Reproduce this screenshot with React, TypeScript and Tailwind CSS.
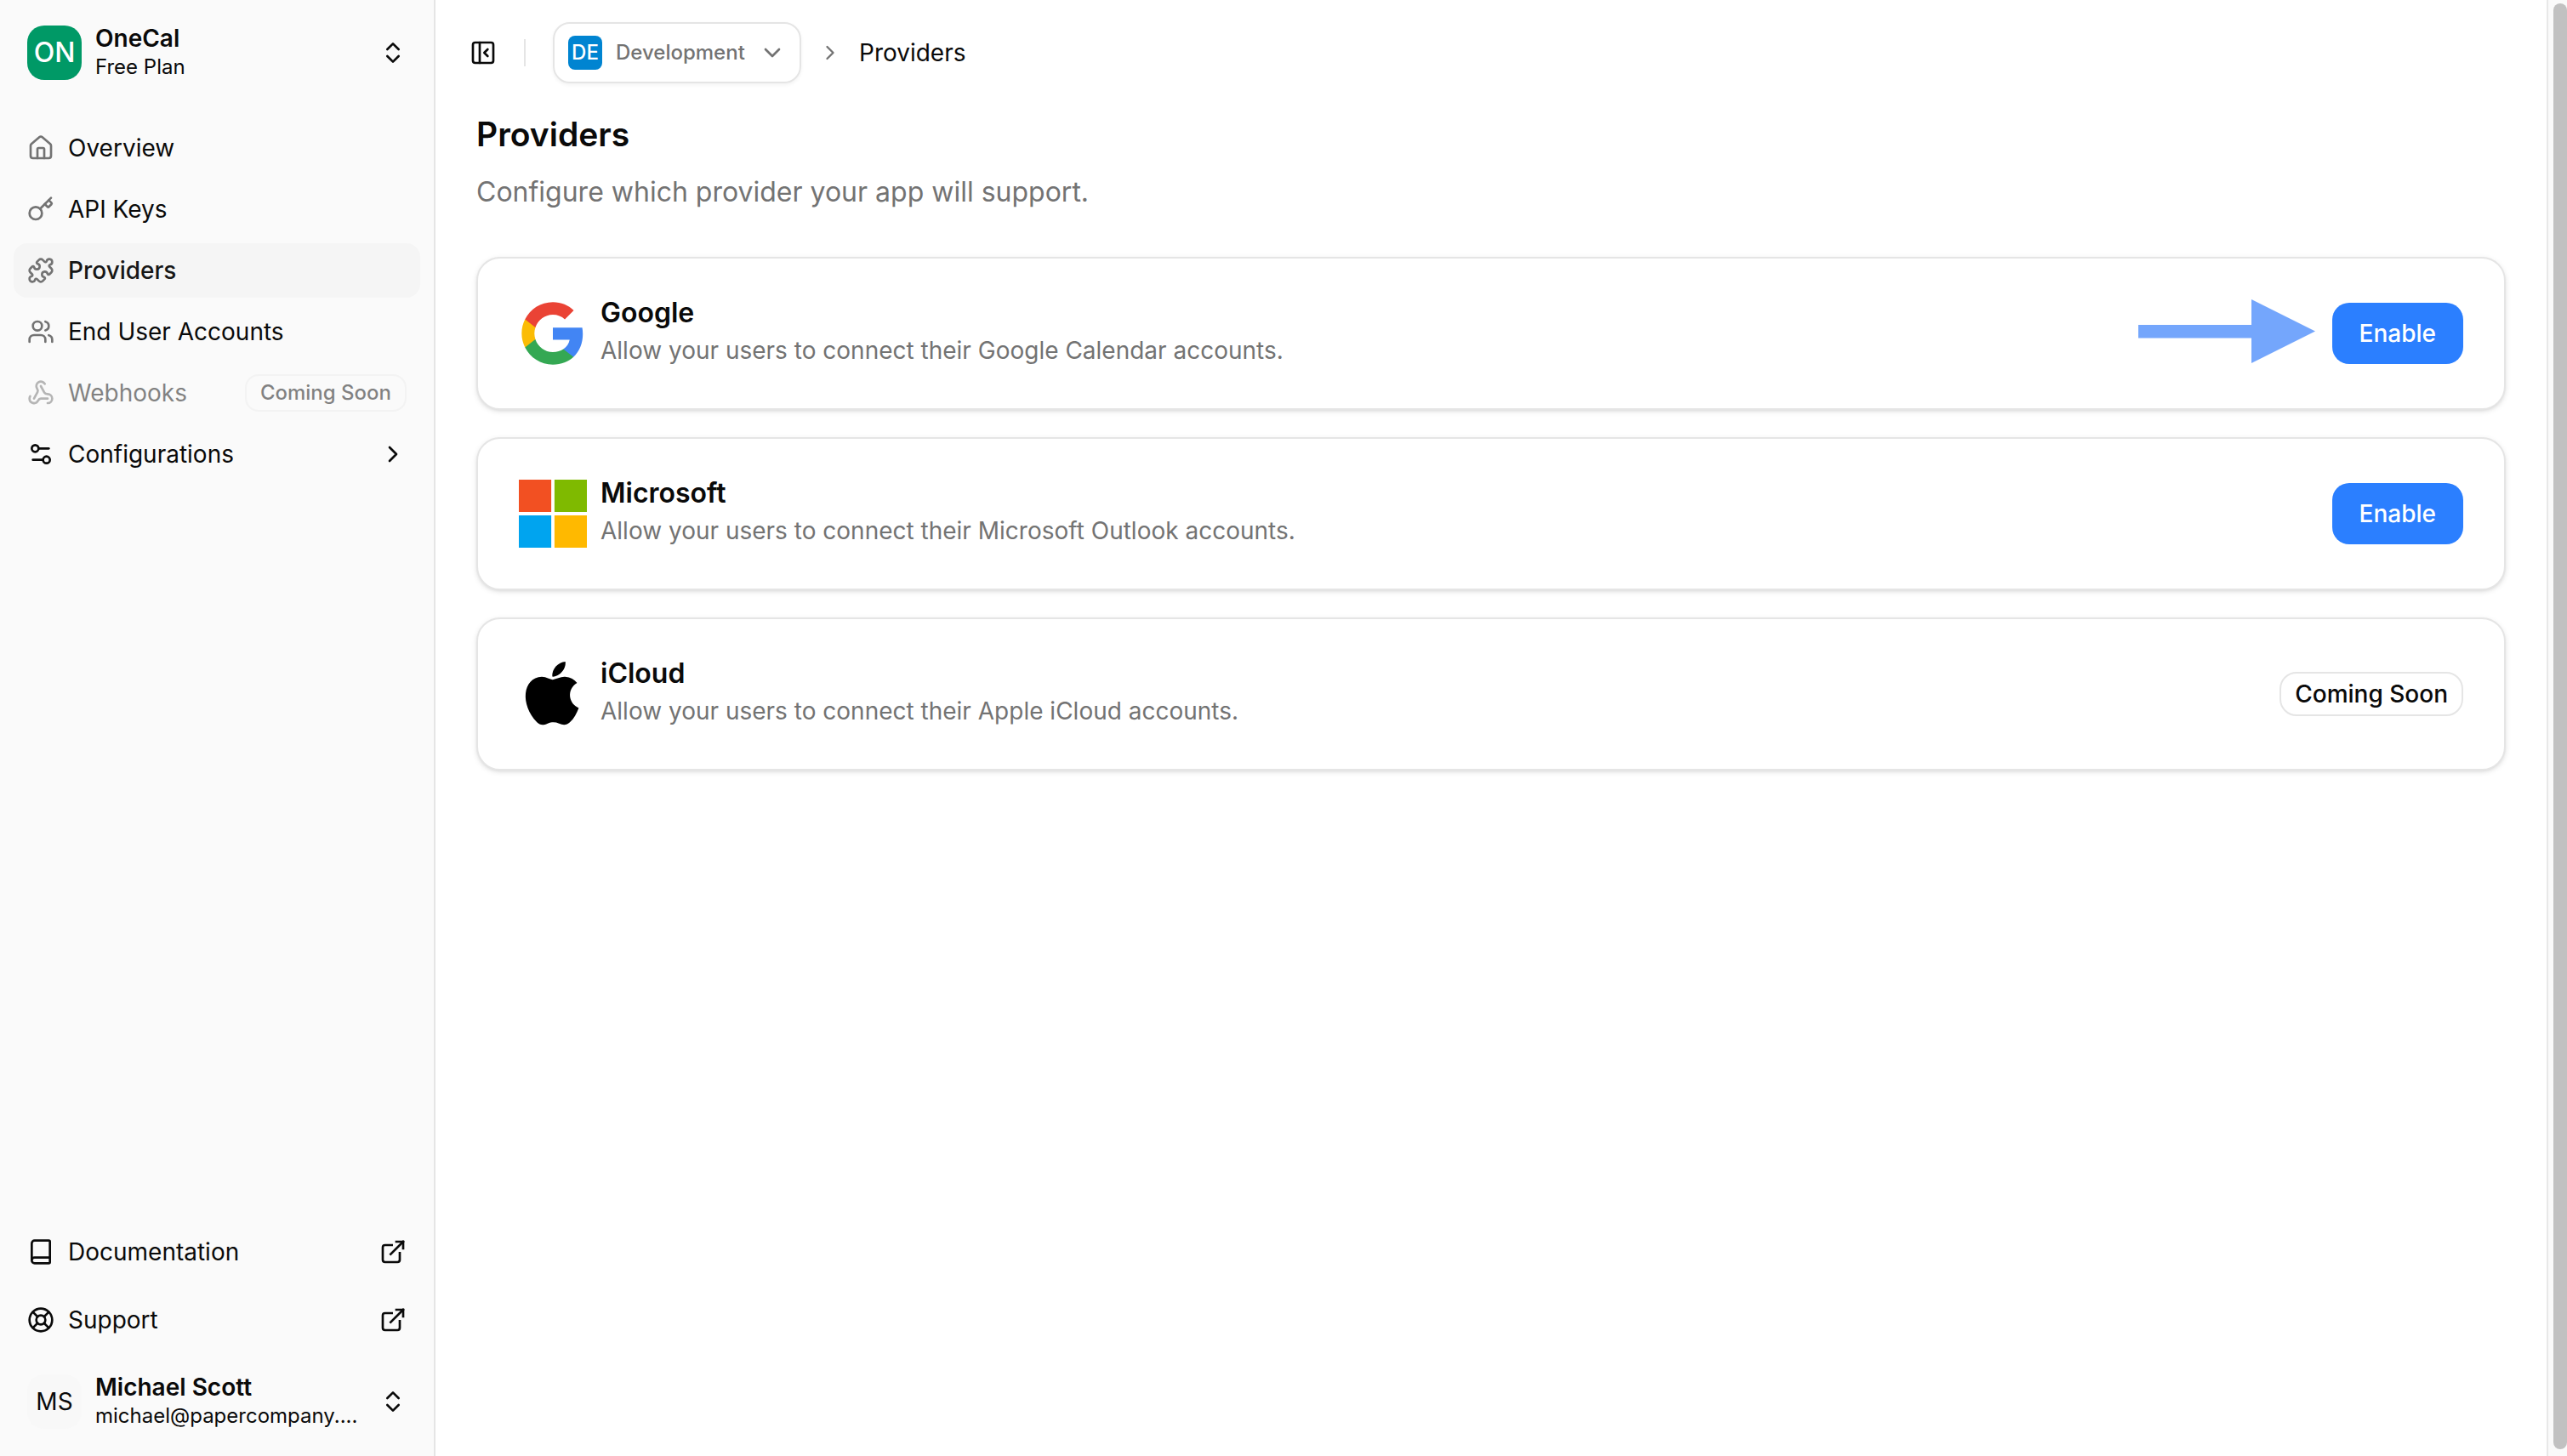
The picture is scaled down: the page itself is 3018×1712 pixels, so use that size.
import type { ReactNode } from "react";
import {
  Book,
  ChevronDown,
  ChevronRight,
  ChevronsUpDown,
  ExternalLink,
  House,
  Key,
  LifeBuoy,
  PanelLeftClose,
  Puzzle,
  Settings2,
  Users,
  Webhook,
} from "lucide-react";

const NAV = [
  { label: "Overview", icon: House },
  { label: "API Keys", icon: Key },
  { label: "Providers", icon: Puzzle, active: true },
  { label: "End User Accounts", icon: Users },
];

const HELP_LINKS = [
  { label: "Documentation", icon: Book },
  { label: "Support", icon: LifeBuoy },
];

function GoogleLogo() {
  return (
    <svg viewBox="0 0 24 24" className="size-20 shrink-0" aria-hidden="true">
      <path
        fill="#4285F4"
        d="M22.56 12.25c0-.78-.07-1.53-.2-2.25H12v4.26h5.92c-.26 1.37-1.04 2.53-2.21 3.31v2.77h3.57c2.08-1.92 3.28-4.74 3.28-8.09z"
      />
      <path
        fill="#34A853"
        d="M12 23c2.97 0 5.46-.98 7.28-2.66l-3.57-2.77c-.98.66-2.23 1.06-3.71 1.06-2.86 0-5.29-1.93-6.16-4.53H2.18v2.84C3.99 20.53 7.7 23 12 23z"
      />
      <path
        fill="#FBBC05"
        d="M5.84 14.09c-.22-.66-.35-1.36-.35-2.09s.13-1.43.35-2.09V7.07H2.18C1.43 8.55 1 10.22 1 12s.43 3.45 1.18 4.93l2.85-2.22.81-.62z"
      />
      <path
        fill="#EA4335"
        d="M12 5.38c1.62 0 3.06.56 4.21 1.64l3.15-3.15C17.45 2.09 14.97 1 12 1 7.7 1 3.99 3.47 2.18 7.07l3.66 2.84c.87-2.6 3.3-4.53 6.16-4.53z"
      />
    </svg>
  );
}

function MicrosoftLogo() {
  return (
    <svg viewBox="0 0 21 21" className="size-20 shrink-0" aria-hidden="true">
      <path fill="#F25022" d="M0 0h10v10H0z" />
      <path fill="#7FBA00" d="M11 0h10v10H11z" />
      <path fill="#00A4EF" d="M0 11h10v10H0z" />
      <path fill="#FFB900" d="M11 11h10v10H11z" />
    </svg>
  );
}

function AppleLogo() {
  return (
    <svg viewBox="2.5 2.5 19.4 19.4" className="size-20 shrink-0" aria-hidden="true">
      <path d="M17.05 20.28c-.98.95-2.05.8-3.08.35-1.09-.46-2.09-.48-3.24 0-1.44.62-2.2.44-3.06-.35C2.79 15.25 3.51 7.59 9.05 7.31c1.35.07 2.29.74 3.08.8 1.18-.24 2.31-.93 3.57-.84 1.51.12 2.65.72 3.4 1.8-3.12 1.87-2.38 5.98.48 7.13-.57 1.5-1.31 2.99-2.54 4.09l.01-.01zM12.03 7.25c-.15-2.23 1.66-4.07 3.74-4.25.29 2.58-2.34 4.5-3.74 4.25z" />
    </svg>
  );
}

function PointerArrow() {
  return (
    <svg viewBox="0 0 208 80" className="h-20 w-52 shrink-0" aria-hidden="true">
      <path fill="#74A6FC" d="M0 30h133V0l75 37.5L133 75V45.5H0z" />
    </svg>
  );
}

function EnableButton() {
  return (
    <button
      type="button"
      className="h-18 rounded-[20px] bg-[#2b7fff] px-8 text-[28px] font-medium text-white"
    >
      Enable
    </button>
  );
}

function ProviderCard({
  logo,
  name,
  description,
  children,
}: {
  logo: ReactNode;
  name: string;
  description: string;
  children: ReactNode;
}) {
  return (
    <li className="flex min-h-[180px] items-center gap-4 rounded-[28px] border-2 border-neutral-200 bg-white px-12 shadow-[0_2px_6px_rgba(0,0,0,0.1),0_2px_4px_-2px_rgba(0,0,0,0.1)]">
      {logo}
      <div className="min-w-0 flex-1">
        <h2 className="text-[32px] leading-[40px] font-semibold">{name}</h2>
        <p className="text-[28px] leading-[48px] text-neutral-500">{description}</p>
      </div>
      <div className="flex items-center gap-5">{children}</div>
    </li>
  );
}

function Sidebar() {
  return (
    <aside className="flex w-[512px] shrink-0 flex-col border-r-2 border-neutral-200 bg-neutral-50 px-4 pt-[14px] pb-4 text-[28px]">
      <button type="button" className="flex h-24 items-center gap-4 px-4 text-left">
        <span className="flex size-16 items-center justify-center rounded-[20px] bg-[#009966] text-[32px] font-medium text-white">
          ON
        </span>
        <span className="flex-1">
          <span className="block leading-[34px] font-semibold">OneCal</span>
          <span className="block text-[24px] leading-[34px]">Free Plan</span>
        </span>
        <ChevronsUpDown className="size-8" />
      </button>

      <nav className="mt-8 flex flex-col gap-2">
        {NAV.map(({ label, icon: Icon, active }) => (
          <a
            key={label}
            href="#"
            className={
              active
                ? "flex h-16 items-center gap-4 rounded-2xl bg-neutral-100 px-4 font-medium text-neutral-900"
                : "flex h-16 items-center gap-4 rounded-2xl px-4"
            }
          >
            <Icon className="size-8 text-neutral-500" />
            {label}
          </a>
        ))}
        <div className="flex h-16 items-center gap-4 px-4 opacity-50">
          <Webhook className="size-8 text-neutral-500" />
          <span className="flex-1">Webhooks</span>
          <span className="flex h-11 items-center rounded-2xl border-2 border-neutral-200/60 px-4 text-[24px] font-medium">
            Coming Soon
          </span>
        </div>
        <button type="button" className="flex h-16 items-center gap-4 px-4 text-left">
          <Settings2 className="size-8" />
          <span className="flex-1">Configurations</span>
          <ChevronRight className="size-8" />
        </button>
      </nav>

      <div className="mt-auto flex flex-col gap-4">
        {HELP_LINKS.map(({ label, icon: Icon }) => (
          <a key={label} href="#" className="flex h-16 items-center gap-4 px-4">
            <Icon className="size-8" />
            <span className="flex-1">{label}</span>
            <ExternalLink className="size-8" strokeLinecap="square" strokeLinejoin="miter" />
          </a>
        ))}
        <button type="button" className="flex h-24 items-center gap-4 px-4 text-left">
          <span className="flex size-16 items-center justify-center rounded-[20px] bg-[#f8f8f8]">
            MS
          </span>
          <span className="min-w-0 flex-1">
            <span className="block leading-[34px] font-semibold">Michael Scott</span>
            <span className="block text-[24px] leading-[34px]">michael@papercompany....</span>
          </span>
          <ChevronsUpDown className="size-8" />
        </button>
      </div>
    </aside>
  );
}

function TopBar() {
  return (
    <header className="flex h-18 items-center">
      <button type="button" aria-label="Toggle sidebar" className="-ml-2">
        <PanelLeftClose className="size-8" />
      </button>
      <span className="mx-8 h-8 w-[2px] bg-neutral-200" />
      <div className="flex h-18 items-center gap-4 rounded-[20px] border-2 border-neutral-200 px-4 text-[24px] font-medium text-neutral-500 shadow-[0_2px_4px_rgba(0,0,0,0.05)]">
        <span className="flex size-10 items-center justify-center rounded-lg bg-[#0084d1] text-white">
          DE
        </span>
        <select aria-label="Environment" className="appearance-none bg-transparent">
          <option>Development</option>
        </select>
        <ChevronDown className="pointer-events-none size-8" />
      </div>
      <ChevronRight className="mx-5 size-7 text-neutral-500" />
      <span className="text-[28px]">Providers</span>
    </header>
  );
}

export default function App() {
  return (
    <div className="flex h-screen overflow-hidden bg-white font-['Inter',sans-serif] text-neutral-950">
      <Sidebar />
      <main className="min-w-0 flex-1 px-12 pt-[26px]">
        <TopBar />
        <h1 className="mt-9 text-[39px] leading-[48px] font-semibold">Providers</h1>
        <p className="mt-5 text-[32px] leading-[48px] text-neutral-500">
          Configure which provider your app will support.
        </p>
        <ul className="mt-[52px] flex flex-col gap-8">
          <ProviderCard
            logo={<GoogleLogo />}
            name="Google"
            description="Allow your users to connect their Google Calendar accounts."
          >
            <PointerArrow />
            <EnableButton />
          </ProviderCard>
          <ProviderCard
            logo={<MicrosoftLogo />}
            name="Microsoft"
            description="Allow your users to connect their Microsoft Outlook accounts."
          >
            <EnableButton />
          </ProviderCard>
          <ProviderCard
            logo={<AppleLogo />}
            name="iCloud"
            description="Allow your users to connect their Apple iCloud accounts."
          >
            <span className="flex h-13 items-center rounded-[20px] border-2 border-neutral-200 px-4 text-[28px] font-medium">
              Coming Soon
            </span>
          </ProviderCard>
        </ul>
      </main>
      {/* scrollbar track */}
      <div className="flex w-6 shrink-0 border-l-2 border-[#e8e8e8] bg-neutral-50 pt-1 pb-2 pl-[6px]">
        <div className="flex-1 rounded-full bg-[#c1c1c1]" />
      </div>
    </div>
  );
}
